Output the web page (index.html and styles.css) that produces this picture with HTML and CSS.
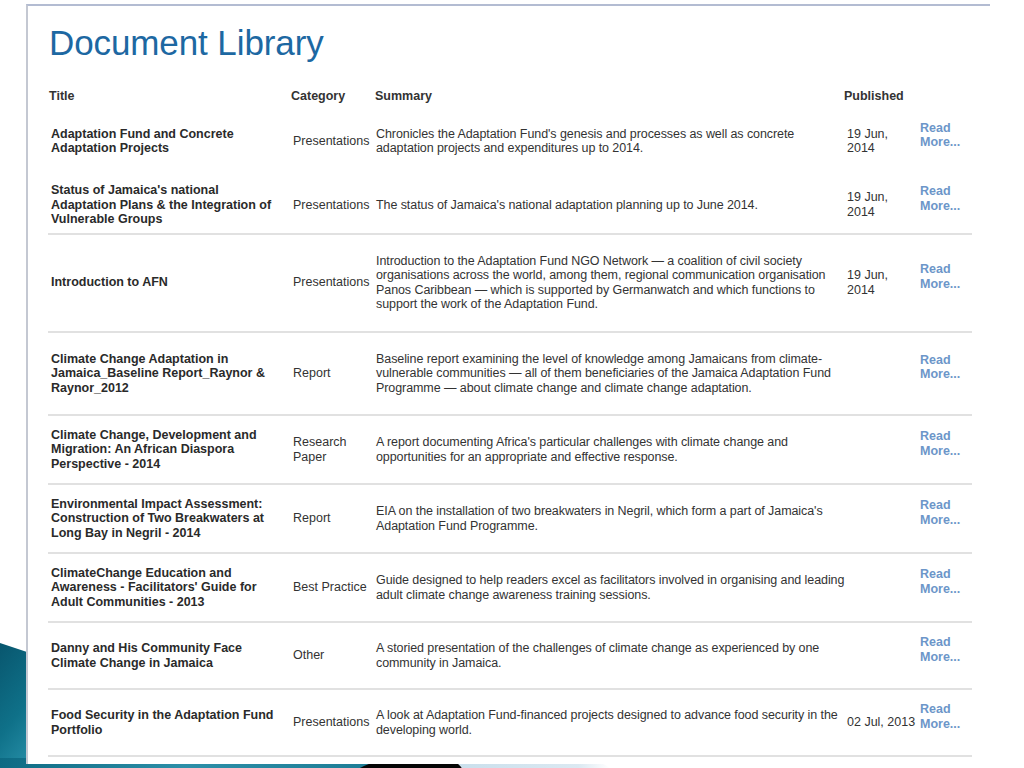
FILE: index.html
```html
<!DOCTYPE html>
<html lang="en">
<head>
<meta charset="utf-8">
<title>Document Library</title>
<link rel="stylesheet" href="styles.css">
</head>
<body>
<svg class="deco" viewBox="0 0 640 130" width="640" height="130" aria-hidden="true">
  <defs>
    <linearGradient id="teal" x1="0" y1="0" x2="0.6" y2="1">
      <stop offset="0" stop-color="#08566e"/>
      <stop offset="0.55" stop-color="#0f7189"/>
      <stop offset="1" stop-color="#2a93ac"/>
    </linearGradient>
    <linearGradient id="tealStrip" x1="0" y1="0" x2="1" y2="0">
      <stop offset="0" stop-color="#0d6a83"/>
      <stop offset="0.5" stop-color="#2c8fa8"/>
      <stop offset="1" stop-color="#1d7d96"/>
    </linearGradient>
    <linearGradient id="pale" x1="0" y1="0" x2="1" y2="0">
      <stop offset="0" stop-color="#c9dfec"/>
      <stop offset="0.8" stop-color="#dbe9f2"/>
      <stop offset="1" stop-color="#ffffff"/>
    </linearGradient>
  </defs>
  <polygon points="0,5 60,25 60,130 0,130" fill="url(#teal)"/>
  <rect x="0" y="120" width="370" height="10" fill="url(#tealStrip)"/>
  <path d="M360,130 C372,124 380,122 392,121 L452,121 C456,124 460,127 462,130 Z" fill="#050505"/>
  <path d="M452,121 L590,121 C600,124 606,127 610,130 L462,130 C460,127 456,124 452,121 Z" fill="url(#pale)"/>
</svg>

<main class="frame">
  <h1 class="page-title">Document Library</h1>

  <div class="doc-table">
    <div class="row head">
      <div class="cell">Title</div>
      <div class="cell">Category</div>
      <div class="cell">Summary</div>
      <div class="cell">Published</div>
      <div class="cell"></div>
    </div>

    <div class="row first">
      <div class="cell title">Adaptation Fund and Concrete<br>Adaptation Projects</div>
      <div class="cell cat">Presentations</div>
      <div class="cell sum">Chronicles the Adaptation Fund's genesis and processes as well as concrete<br>adaptation projects and expenditures up to 2014.</div>
      <div class="cell date">19 Jun,<br>2014</div>
      <div class="cell more"><a href="#">Read<br>More...</a></div>
    </div>

    <div class="row compact">
      <div class="cell title">Status of Jamaica's national<br>Adaptation Plans &amp; the Integration of<br>Vulnerable Groups</div>
      <div class="cell cat">Presentations</div>
      <div class="cell sum">The status of Jamaica's national adaptation planning up to June 2014.</div>
      <div class="cell date">19 Jun,<br>2014</div>
      <div class="cell more"><a href="#">Read<br>More...</a></div>
    </div>

    <div class="row">
      <div class="cell title">Introduction to AFN</div>
      <div class="cell cat">Presentations</div>
      <div class="cell sum">Introduction to the Adaptation Fund NGO Network — a coalition of civil society<br>organisations across the world, among them, regional communication organisation<br>Panos Caribbean — which is supported by Germanwatch and which functions to<br>support the work of the Adaptation Fund.</div>
      <div class="cell date">19 Jun,<br>2014</div>
      <div class="cell more"><a href="#">Read<br>More...</a></div>
    </div>

    <div class="row">
      <div class="cell title">Climate Change Adaptation in<br>Jamaica_Baseline Report_Raynor &amp;<br>Raynor_2012</div>
      <div class="cell cat">Report</div>
      <div class="cell sum">Baseline report examining the level of knowledge among Jamaicans from climate-<br>vulnerable communities — all of them beneficiaries of the Jamaica Adaptation Fund<br>Programme — about climate change and climate change adaptation.</div>
      <div class="cell date"></div>
      <div class="cell more"><a href="#">Read<br>More...</a></div>
    </div>

    <div class="row">
      <div class="cell title">Climate Change, Development and<br>Migration: An African Diaspora<br>Perspective - 2014</div>
      <div class="cell cat">Research<br>Paper</div>
      <div class="cell sum">A report documenting Africa's particular challenges with climate change and<br>opportunities for an appropriate and effective response.</div>
      <div class="cell date"></div>
      <div class="cell more"><a href="#">Read<br>More...</a></div>
    </div>

    <div class="row">
      <div class="cell title">Environmental Impact Assessment:<br>Construction of Two Breakwaters at<br>Long Bay in Negril - 2014</div>
      <div class="cell cat">Report</div>
      <div class="cell sum">EIA on the installation of two breakwaters in Negril, which form a part of Jamaica's<br>Adaptation Fund Programme.</div>
      <div class="cell date"></div>
      <div class="cell more"><a href="#">Read<br>More...</a></div>
    </div>

    <div class="row">
      <div class="cell title">ClimateChange Education and<br>Awareness - Facilitators' Guide for<br>Adult Communities - 2013</div>
      <div class="cell cat">Best Practice</div>
      <div class="cell sum">Guide designed to help readers excel as facilitators involved in organising and leading<br>adult climate change awareness training sessions.</div>
      <div class="cell date"></div>
      <div class="cell more"><a href="#">Read<br>More...</a></div>
    </div>

    <div class="row short">
      <div class="cell title">Danny and His Community Face<br>Climate Change in Jamaica</div>
      <div class="cell cat">Other</div>
      <div class="cell sum">A storied presentation of the challenges of climate change as experienced by one<br>community in Jamaica.</div>
      <div class="cell date"></div>
      <div class="cell more"><a href="#">Read<br>More...</a></div>
    </div>

    <div class="row short">
      <div class="cell title">Food Security in the Adaptation Fund<br>Portfolio</div>
      <div class="cell cat">Presentations</div>
      <div class="cell sum">A look at Adaptation Fund-financed projects designed to advance food security in the<br>developing world.</div>
      <div class="cell date">02 Jul, 2013</div>
      <div class="cell more"><a href="#">Read<br>More...</a></div>
    </div>
  </div>
</main>
</body>
</html>
```

FILE: styles.css
```css
html, body {
  margin: 0;
  padding: 0;
  background: #ffffff;
}

body {
  position: relative;
  width: 1024px;
  height: 768px;
  overflow: hidden;
  font-family: "Liberation Sans", Arial, sans-serif;
  color: #333333;
}

.deco {
  position: absolute;
  left: 0;
  bottom: 0;
  z-index: 0;
  display: block;
}

.frame {
  position: relative;
  z-index: 1;
  box-sizing: border-box;
  width: 964px;
  height: 760px;
  margin: 4px 0 0 26px;
  background: #ffffff;
  border-top: 2px solid #b3bcd2;
  border-left: 2px solid #c4c8d2;
  padding: 17px 0 0 20px;
}

.page-title {
  margin: 0 0 0 1px;
  font-size: 35px;
  line-height: 40px;
  font-weight: normal;
  color: #1d68a2;
  letter-spacing: -0.1px;
}

.doc-table {
  width: 924px;
  margin-top: 26px;
  font-size: 12.5px;
  line-height: 14.5px;
}

.row {
  display: grid;
  grid-template-columns: 242px 84px 469px 75px 54px;
  align-items: center;
  padding: 11px 0;
  border-bottom: 2px solid #e1e1e1;
}

.row .cell {
  padding-left: 3px;
}

.row.head {
  padding: 0 0 2.5px;
  border-bottom: none;
  font-weight: bold;
  color: #333333;
}

.row.head .cell {
  padding-left: 1px;
}

.row.first {
  padding: 12.5px 0 9.5px;
  border-bottom: none;
}

.row.compact {
  padding: 10px 0 6px;
}

.row.short {
  padding: 10px 0;
}

.cell.title {
  font-weight: bold;
  color: #2a2a2a;
  white-space: nowrap;
}

.cell.sum {
  padding-top: 8px;
  padding-bottom: 8px;
  padding-left: 2px;
  white-space: nowrap;
  letter-spacing: -0.08px;
}

.row.compact .cell.sum {
  padding-top: 0;
  padding-bottom: 0;
}

.cell.date {
  padding-left: 4px;
  white-space: nowrap;
}

.cell.more {
  padding-left: 2px;
  padding-bottom: 12px;
}

.cell.more a {
  color: #6c96c9;
  font-weight: bold;
  text-decoration: none;
}
```
